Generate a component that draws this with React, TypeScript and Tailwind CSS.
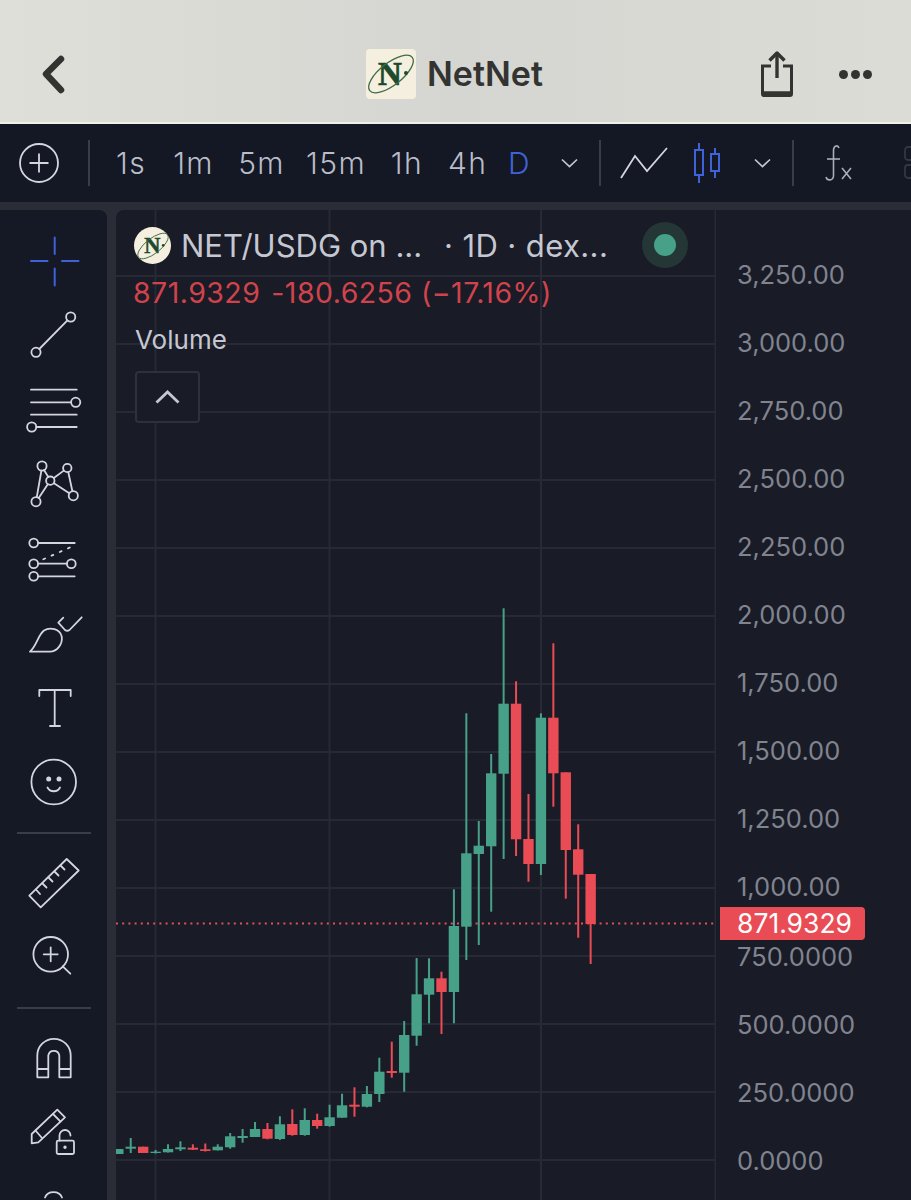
const STROKE = "#d3d6de";

// [top wick, top body, bottom body, bottom wick, red?] in page pixels
const candles: [number, number, number, number, boolean][] = [
  [1149, 1149, 1154, 1154, false],
  [1138, 1146.7, 1148.7, 1153, false],
  [1146.7, 1146.7, 1153, 1153, true],
  [1150, 1151.7, 1153, 1153.5, false],
  [1144.3, 1149, 1152.3, 1152.5, false],
  [1141.3, 1147.3, 1149.3, 1151, false],
  [1144.3, 1147.7, 1149.7, 1150, true],
  [1143.5, 1149.3, 1151, 1151.5, true],
  [1144.3, 1146.7, 1150.3, 1150.5, false],
  [1133, 1136.3, 1147.3, 1148.7, false],
  [1129, 1136, 1138, 1142.7, false],
  [1122, 1129, 1137, 1137, false],
  [1123, 1129, 1138.7, 1139.3, true],
  [1116.3, 1124.3, 1139, 1140, false],
  [1109.3, 1124, 1135, 1135.7, true],
  [1108.3, 1120, 1135, 1135.7, false],
  [1113.7, 1120, 1126, 1128.7, true],
  [1104.7, 1117.3, 1126, 1126.7, false],
  [1093.7, 1105.3, 1117.7, 1117.7, false],
  [1087.3, 1104.7, 1106.7, 1116.7, true],
  [1086, 1094, 1106.7, 1107.3, false],
  [1057.7, 1071.7, 1094, 1102, false],
  [1041.7, 1071, 1073, 1077.7, true],
  [1021, 1035, 1072.7, 1091.7, false],
  [958, 994.3, 1035.7, 1045.7, false],
  [958.3, 978.3, 994.7, 1023.3, false],
  [971.7, 978.3, 992, 1034, true],
  [889.3, 926, 992, 1023.3, false],
  [713.3, 853.3, 926.7, 960, false],
  [821, 845.7, 854, 945, false],
  [754, 773.3, 846.3, 911.7, false],
  [608.3, 703.7, 773.7, 859, false],
  [681.3, 703.7, 839.3, 856, true],
  [794, 839, 864, 881.7, true],
  [713.3, 717.7, 864, 875, false],
  [643.3, 717.7, 773.3, 806.7, true],
  [772.3, 772.3, 850, 898.7, true],
  [824.3, 849.3, 874.7, 937.7, true],
  [874, 874, 924, 964, true],
];

const intervals = [
  { label: "1s", cell: "w-[58px]" },
  { label: "1m", cell: "w-[66px]" },
  { label: "5m", cell: "w-[69px]" },
  { label: "15m", cell: "w-[86px]" },
  { label: "1h", cell: "w-[58px]" },
  { label: "4h", cell: "w-[61px]" },
];
const prices = [
  "3,250.00",
  "3,000.00",
  "2,750.00",
  "2,500.00",
  "2,250.00",
  "2,000.00",
  "1,750.00",
  "1,500.00",
  "1,250.00",
  "1,000.00",
  "750.0000",
  "500.0000",
  "250.0000",
  "0.0000",
];
const gridRows = [276, 344, 412, 480, 548, 616, 684, 752, 820, 888, 956, 1024, 1092, 1160];
const gridCols = [155.5, 329.5, 541, 715.5];

const NetLogo = ({ size }: { size: number }) => (
  <svg width={size} height={size} viewBox="0 0 50 50" className="block">
    <text
      x="24"
      y="36"
      textAnchor="middle"
      fontFamily="'Liberation Serif', serif"
      fontWeight="700"
      fontSize="33"
      fill="#1d4a2c"
      stroke="#1d4a2c"
      strokeWidth="0.7"
    >
      N
    </text>
    <ellipse
      cx="25"
      cy="25"
      rx="27"
      ry="11"
      transform="rotate(-38 25 25)"
      fill="none"
      stroke="#3f6b47"
      strokeWidth="1.3"
    />
    <circle cx="40" cy="24" r="2" fill="#1d4a2c" />
  </svg>
);

const Tool = ({ top, height, children }: { top: number; height: number; children: React.ReactNode }) => (
  <svg
    width="107"
    height={height}
    viewBox={`0 ${top} 107 ${height}`}
    fill="none"
    stroke={STROKE}
    strokeWidth="1.8"
    strokeLinecap="round"
    strokeLinejoin="round"
    className="block shrink-0"
  >
    {children}
  </svg>
);

const Chevron = () => (
  <svg width="17" height="10" viewBox="0 0 17 10" fill="none" stroke="#c4c7d0" strokeWidth="1.7" className="block">
    <path d="M1 1.5 8.5 8.5 16 1.5" />
  </svg>
);

const Rule = () => <div className="h-[46px] w-[2px] shrink-0 bg-[#3a3d47]" />;

const SideTools = () => (
  <aside className="h-full w-[107px] shrink-0 overflow-hidden rounded-tr-lg bg-[#151825]">
    <Tool top={210} height={90}>
      <g stroke="#3f62d8" strokeWidth="2">
        <path d="M54.7 237.5V254M54.7 268.5V285.5M31 261H47.5M62 261H78.5" />
      </g>
    </Tool>
    <Tool top={300} height={72}>
      <circle cx="70.7" cy="317" r="4.6" />
      <circle cx="36" cy="352.3" r="4.6" />
      <path d="M39.3 349 67.4 320.4" />
    </Tool>
    <Tool top={372} height={72}>
      <path d="M31 389.7H76.7M31 402.3H71M31 414.7H76.7M36.3 427H76.7" />
      <circle cx="75.7" cy="402.3" r="4.6" />
      <circle cx="31.7" cy="427" r="4.6" />
    </Tool>
    <Tool top={444} height={76}>
      <circle cx="42" cy="466" r="4.6" />
      <circle cx="67.3" cy="468" r="4.2" />
      <circle cx="50.3" cy="480.7" r="4.2" />
      <circle cx="36" cy="501.7" r="4.6" />
      <circle cx="73.3" cy="495.7" r="4.6" />
      <path d="M41.4 470.6 36.8 497M44 470 48.3 477M38.7 498 47.8 484.3M53.8 478 63.8 470.6M54 483.2 69.3 493.3M68.3 472.2 72.4 491.2" />
    </Tool>
    <Tool top={520} height={80}>
      <circle cx="33.7" cy="543" r="4.4" />
      <circle cx="33.7" cy="563.7" r="4.4" />
      <circle cx="71.3" cy="563.7" r="4.4" />
      <circle cx="33.7" cy="576.3" r="4.4" />
      <path d="M38 543H74.7M38 563.7H67M38 576.3H74.7" />
      <path d="M43.3 559.3 71.7 546.7" strokeDasharray="2 7" />
    </Tool>
    <Tool top={600} height={70}>
      <path d="M30 651.7C37 645 38 635 44 630.5C50 626.5 60 629 61.7 636.5C63 644 57 651.7 50 651.7Z" />
      <path d="M63.3 617.7 58.3 622.7 65 630C66.5 631 68 631 69.5 630L81.7 617.3" />
    </Tool>
    <Tool top={670} height={76}>
      <path d="M39.3 696V690H70.7V696M54.7 690V726M50 726H60" />
    </Tool>
    <Tool top={746} height={78}>
      <circle cx="53.7" cy="782" r="22.3" />
      <circle cx="48.7" cy="779" r="1.6" fill={STROKE} />
      <circle cx="59" cy="779" r="1.6" fill={STROKE} />
      <path d="M47.5 787.5C50 792.5 57.5 792.5 60 787.5" />
    </Tool>
    <div className="mx-auto my-[8px] ml-[17px] h-[2px] w-[74px] bg-[#3a3d47]" />
    <Tool top={843} height={76}>
      <path d="M66.7 860 78.7 871.5 40.7 908.3 29.3 896.7Z" />
      <path d="M36 890.5 40 895M42.5 884.5 46.5 888.5M48.5 878.5 52.5 882.5M54.5 872.5 58.5 876.5M60.5 866.5 64.5 870.5" />
    </Tool>
    <Tool top={919} height={80}>
      <circle cx="50.7" cy="955.3" r="17.3" />
      <path d="M50.7 948.3V962.3M43.7 955.3H57.7M62.7 967.3 70.3 974.7" />
    </Tool>
    <div className="my-[9px] ml-[17px] h-[2px] w-[74px] bg-[#3a3d47]" />
    <Tool top={1019} height={76}>
      <path d="M37.3 1078.3V1056.5A16.7 16.7 0 0 1 70.7 1056.5V1078.3H59.3V1056.5A5.6 5.6 0 0 0 48.3 1056.5V1078.3ZM37.3 1070H48.3M59.3 1070H70.7" />
    </Tool>
    <Tool top={1095} height={85}>
      <path d="M57.3 1110.7 65 1118.3 38.3 1143.3 31.7 1144.3 31.7 1135Z" />
      <path d="M53 1115 60.6 1122.6M35.5 1131.5 42 1139" />
      <rect x="56.7" y="1141.7" width="17.3" height="13.3" rx="1.5" />
      <path d="M59.5 1141.7V1136.5A5.5 5.5 0 0 1 70.5 1136.5" />
      <circle cx="65" cy="1148.3" r="0.8" fill={STROKE} />
    </Tool>
    <Tool top={1180} height={20}>
      <path d="M45 1198.5A9 8 0 0 1 62 1198.5" />
    </Tool>
  </aside>
);

const Plot = () => (
  <svg width="600" height="990" viewBox="116 210 600 990" className="absolute inset-0 block">
    {gridRows.map((y) => (
      <line key={y} x1="116" x2="716" y1={y} y2={y} stroke="#272a34" strokeWidth="2" />
    ))}
    {gridCols.map((x) => (
      <line key={x} x1={x} x2={x} y1="210" y2="1200" stroke="#272a34" strokeWidth="2" />
    ))}
    <line x1="116" x2="716" y1="923.5" y2="923.5" stroke="#e0525a" strokeWidth="1.8" strokeDasharray="2 4.2" />
    {candles.map(([high, top, bottom, low, red], i) => {
      const x = 118.3 + i * 12.43;
      const color = red ? "#e94c55" : "#47a189";
      return (
        <g key={i} fill={color}>
          <rect x={x - 1} y={high} width="2" height={low - high} />
          <rect x={x - 5.2} y={top} width="10.4" height={bottom - top} />
        </g>
      );
    })}
  </svg>
);

export default function App() {
  return (
    <div className="flex h-[1200px] w-[911px] flex-col overflow-hidden bg-[#2a2d36] [font-family:Inter,sans-serif]">
      <header className="flex h-[124px] shrink-0 items-center border-b-2 border-[#eeeeea] bg-gradient-to-r from-[#dfdfd9] via-[#d5d6d1] to-[#dcdcd6] pt-[26px] text-[#333431]">
        <svg width="30" height="40" viewBox="0 0 30 40" fill="none" stroke="#333431" strokeWidth="6.5" strokeLinecap="round" strokeLinejoin="round" className="ml-[39px] block">
          <path d="M22 5 7 20 22 36" />
        </svg>
        <div className="ml-[297px] flex h-[50px] w-[50px] items-center justify-center rounded-[4px] bg-[#f5efdf]">
          <NetLogo size={50} />
        </div>
        <span className="ml-[11px] w-[120px] text-[34px] font-semibold leading-none">NetNet</span>
        <svg width="36" height="48" viewBox="0 0 36 48" fill="none" stroke="#333431" className="ml-[212px] block">
          <path d="M18 3V28" strokeWidth="3.4" />
          <path d="M10.5 10.5 18 3 25.5 10.5" strokeWidth="3.4" strokeLinejoin="round" />
          <path d="M12 16H3.5V44C3.5 45 4 45.5 5 45.5H31C32 45.5 32.5 45 32.5 44V16H24" strokeWidth="3" />
          <path d="M3.5 43.5H32.5" strokeWidth="4.5" />
        </svg>
        <div className="ml-[44px] flex gap-[3px]">
          <span className="h-[9px] w-[9px] rounded-full bg-[#333431]" />
          <span className="h-[9px] w-[9px] rounded-full bg-[#333431]" />
          <span className="h-[9px] w-[9px] rounded-full bg-[#333431]" />
        </div>
      </header>

      <nav className="flex h-[78px] shrink-0 items-center overflow-hidden bg-[#141724] text-[30px] leading-none text-[#b9bdc9]">
        <svg width="40" height="40" viewBox="0 0 40 40" fill="none" stroke="#d3d6de" strokeWidth="1.8" className="ml-[19px] block shrink-0">
          <circle cx="20" cy="20" r="19" />
          <path d="M20 10.5V29.5M10.5 20H29.5" />
        </svg>
        <div className="ml-[29px] mr-[26px]">
          <Rule />
        </div>
        <div className="flex w-[415px] shrink-0 font-light tracking-[1.4px]">
          {intervals.map(({ label, cell }) => (
            <span key={label} className={cell}>
              {label}
            </span>
          ))}
          <span className="text-[#3f62d8]">D</span>
        </div>
        <div className="ml-[30px] shrink-0">
          <Chevron />
        </div>
        <div className="ml-[21px] shrink-0">
          <Rule />
        </div>
        <svg width="48" height="32" viewBox="0 0 48 32" fill="none" stroke="#d3d6de" strokeWidth="1.8" className="ml-[19px] block shrink-0">
          <path d="M1 31 15 9 27 24 47 1" />
        </svg>
        <svg width="28" height="42" viewBox="0 0 28 42" fill="none" stroke="#3f62d8" strokeWidth="2" className="ml-[25px] block shrink-0">
          <rect x="2" y="8" width="8" height="25" />
          <path d="M6 1V8M6 33V41" />
          <rect x="18" y="12" width="8" height="17" />
          <path d="M22 6V12M22 29V36" />
        </svg>
        <div className="ml-[33px] shrink-0">
          <Chevron />
        </div>
        <div className="ml-[21px] shrink-0">
          <Rule />
        </div>
        <svg width="30" height="38" viewBox="0 0 30 38" fill="none" stroke="#a9adb8" strokeWidth="1.6" className="ml-[29px] block shrink-0">
          <path d="M16 4C15 1 11 1 10.5 6V32C10 37 4 37 3 33" />
          <path d="M4 15H17" />
          <path d="M19 24 28 35M28 24 19 35" />
        </svg>
        <svg width="14" height="34" viewBox="0 0 14 34" fill="none" stroke="#343742" strokeWidth="1.8" className="ml-[51px] block shrink-0">
          <rect x="1" y="1" width="20" height="13" rx="3" />
          <rect x="1" y="19" width="20" height="13" rx="3" />
        </svg>
      </nav>

      <main className="mt-[8px] flex min-h-0 flex-1 gap-[9px]">
        <SideTools />
        <section className="flex min-w-0 flex-1 overflow-hidden rounded-tl-lg bg-[#191b26]">
          <div className="relative h-full w-[600px] shrink-0">
            <Plot />
            <div className="absolute left-[18px] top-[17px] flex h-[37px] items-center">
              <div className="flex h-[37px] w-[37px] items-center justify-center overflow-hidden rounded-full bg-[#f5efdf]">
                <NetLogo size={34} />
              </div>
              <span className="ml-[10px] w-[263px] text-[31px] leading-none text-[#c5c8d2]">NET/USDG on ...</span>
              <span className="text-[31px] leading-none tracking-[0.4px] text-[#c5c8d2]">· 1D · dex...</span>
            </div>
            <div className="absolute left-[526px] top-[12px] flex h-[46px] w-[46px] items-center justify-center rounded-full bg-[#243636]">
              <span className="h-[22px] w-[22px] rounded-full bg-[#47a189]" />
            </div>
            <p className="absolute left-[17px] top-[69px] flex gap-[11px] text-[28.5px] leading-none tracking-[0.45px] text-[#d1434c]">
              <span>871.9329</span>
              <span>-180.6256 (−17.16%)</span>
            </p>
            <p className="absolute left-[19px] top-[117px] text-[26px] leading-none text-[#c5c8d2]">Volume</p>
            <div className="absolute left-[19px] top-[161px] flex h-[52px] w-[65px] items-center justify-center rounded-[4px] border-2 border-[#2e313b] bg-[#191b26]">
              <svg width="25" height="14" viewBox="0 0 25 14" fill="none" stroke="#c5c8d2" strokeWidth="2.8" className="block">
                <path d="M1.5 12.5 12.5 2 23.5 12.5" />
              </svg>
            </div>
          </div>
          <div className="relative flex-1 pl-[21px] pt-[31px] text-[25.5px] text-[#80848f]">
            {prices.map((price, i) => (
              <div key={price} className={i === 10 ? "mt-[2px] flex h-[68px] items-center leading-none" : "flex h-[68px] items-center leading-none"}>
                {price}
              </div>
            ))}
            <div className="absolute left-[4px] top-[697px] flex h-[33px] w-[145px] items-center rounded-r-[4px] bg-[#e94c55] pl-[17px] text-[26.5px] leading-none text-white">
              871.9329
            </div>
          </div>
        </section>
      </main>
    </div>
  );
}
